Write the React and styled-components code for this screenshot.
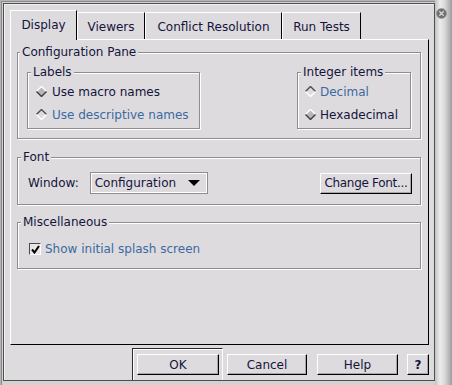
import React from 'react';
import styled, { createGlobalStyle } from 'styled-components';

const GlobalStyle = createGlobalStyle`
  html, body {
    margin: 0;
    padding: 0;
    background: #dedbde;
  }
  body {
    font-family: "DejaVu Sans", "Liberation Sans", sans-serif;
    font-size: 12px;
    color: #14143c;
  }
`;

const BG = '#dedbde';
const INK = '#14143c';
const LINK = '#3a6aa2';

const Screen = styled.div`
  display: flex;
  width: 452px;
  height: 385px;
  overflow: hidden;
`;

const Frame = styled.div`
  width: 435px;
  height: 385px;
  box-sizing: border-box;
  padding: 3px 0 4px 3px;
  background: #d2d2d2;
  box-shadow: inset 1px 1px 0 #b4b4b4, inset 2px 2px 0 #8a8a8a;
`;

const Window = styled.div`
  height: 100%;
  box-sizing: border-box;
  border: 1px solid #4e4e4e;
  background: ${BG};
  box-shadow: inset 1px 1px 0 #f2f2f2;
  display: flex;
  flex-direction: column;
  padding: 6px 5px 0 6px;
`;

const TabStrip = styled.div`
  display: flex;
  align-items: flex-end;
  height: 29px;
`;

const Tab = styled.div`
  box-sizing: border-box;
  width: ${p => p.$w}px;
  height: ${p => (p.$active ? 30 : 27)}px;
  margin-bottom: ${p => (p.$active ? -1 : 0)}px;
  position: relative;
  z-index: ${p => (p.$active ? 1 : 0)};
  background: ${BG};
  border-top: 1px solid #ffffff;
  border-left: 1px solid #ffffff;
  border-right: 1px solid #000000;
  display: flex;
  align-items: center;
  justify-content: center;
  padding-top: ${p => (p.$active ? 0 : 1)}px;
  padding-bottom: ${p => (p.$active ? 1 : 0)}px;
  color: ${INK};
  white-space: nowrap;
`;

const Pane = styled.div`
  box-sizing: border-box;
  height: 306px;
  border-top: 1px solid #ffffff;
  border-left: 1px solid #ffffff;
  border-right: 1px solid #000000;
  border-bottom: 1px solid #000000;
  padding: 12px 7px 0 6px;
  display: flex;
  flex-direction: column;
`;

const Group = styled.div`
  position: relative;
  box-sizing: border-box;
  border: 1px solid #8e8c8e;
  box-shadow: inset 1px 1px 0 #ffffff, 1px 1px 0 #ffffff;
  margin-top: ${p => p.$mt || 0}px;
  width: ${p => (p.$w ? `${p.$w}px` : 'auto')};
  height: ${p => (p.$h ? `${p.$h}px` : 'auto')};
`;

const GroupLabel = styled.span`
  position: absolute;
  top: -8px;
  left: ${p => p.$left ?? 3}px;
  padding: 0 2px;
  line-height: 14px;
  background: ${BG};
  color: ${INK};
  white-space: nowrap;
`;

const ConfigBody = styled.div`
  display: flex;
  justify-content: space-between;
  padding: 19px 9px 9px 9px;
`;

const OptionList = styled.div`
  display: flex;
  flex-direction: column;
  padding: 7px 0 0 ${p => p.$inset}px;
`;

const Option = styled.div`
  display: flex;
  align-items: center;
  height: 23px;
  gap: ${p => p.$gap}px;
  color: ${p => (p.$on ? LINK : INK)};
  white-space: nowrap;
`;

const FontRow = styled.div`
  display: flex;
  align-items: center;
  padding: 14px 8px 10px 10px;
`;

const FieldLabel = styled.span`
  margin-right: 11px;
`;

const Combo = styled.div`
  box-sizing: border-box;
  width: 118px;
  height: 22px;
  border: 1px solid #8e8c8e;
  box-shadow: inset 0 0 0 1px #ffffff;
  display: flex;
  align-items: center;
  justify-content: space-between;
  padding: 0 7px 0 4px;
  color: ${INK};
`;

const Arrow = styled.span`
  width: 0;
  height: 0;
  border-left: 6px solid transparent;
  border-right: 6px solid transparent;
  border-top: 6px solid #000000;
`;

const Button = styled.button`
  box-sizing: border-box;
  width: ${p => p.$w}px;
  height: 21px;
  margin: 0;
  padding: 0;
  background: ${BG};
  border-top: 1px solid #ffffff;
  border-left: 1px solid #ffffff;
  border-right: 1px solid #000000;
  border-bottom: 1px solid #000000;
  box-shadow: inset -1px -1px 0 #a8a6a8;
  font-family: "DejaVu Sans", "Liberation Sans", sans-serif;
  font-size: 12px;
  font-weight: ${p => (p.$bold ? 700 : 400)};
  color: ${INK};
  white-space: nowrap;
  letter-spacing: ${p => p.$tight ? '-0.3px' : 'normal'};
`;

const Spacer = styled.div`
  flex: 1;
`;

const CheckRow = styled.div`
  display: flex;
  align-items: center;
  gap: 4px;
  padding: 19px 0 12px 11px;
  color: ${LINK};
`;

const CheckBox = styled.span`
  box-sizing: border-box;
  width: 12px;
  height: 12px;
  border-top: 1px solid #4a4a4a;
  border-left: 1px solid #4a4a4a;
  border-right: 1px solid #ffffff;
  border-bottom: 1px solid #ffffff;
  background: #e8e6e8;
  display: flex;
  align-items: center;
  justify-content: center;
`;

const ButtonBar = styled.div`
  display: flex;
  justify-content: flex-end;
  align-items: flex-start;
  margin-top: 3px;
  flex: 1;
`;

const DefaultFrame = styled.div`
  box-sizing: border-box;
  width: 91px;
  height: 100%;
  border-top: 1px solid #2a2a2a;
  border-left: 1px solid #2a2a2a;
  border-right: 1px solid #ffffff;
  box-shadow: inset 1px 1px 0 #ffffff;
  padding: 5px 0 0 4px;
  margin-right: 4px;
`;

const BarButton = styled(Button)`
  margin-top: 6px;
  margin-left: ${p => p.$ml || 0}px;
`;

const Strip = styled.div`
  width: 17px;
  height: 385px;
  position: relative;
  background: linear-gradient(to right, #c2c2c2 0%, #ececec 30%, #d6d6d6 60%, #9c9c9c 100%);
`;

const CloseDot = styled.svg`
  position: absolute;
  top: 8px;
  left: 1px;
`;

function Diamond({ sunken }) {
  const hi = sunken ? '#4a4a4a' : '#ffffff';
  const lo = sunken ? '#ffffff' : '#3c3c3c';
  return (
    <svg width="11" height="11" viewBox="0 0 11 11">
      <polygon points="5.5,0.5 10.5,5.5 5.5,10.5 0.5,5.5" fill={sunken ? BG : '#b8b6b8'} />
      <polyline points="0.5,5.5 5.5,0.5 10.5,5.5" fill="none" stroke={hi} strokeWidth="1.4" />
      <polyline points="0.5,5.5 5.5,10.5 10.5,5.5" fill="none" stroke={lo} strokeWidth="1.4" />
    </svg>
  );
}

function Radio({ on, gap, children }) {
  return (
    <Option $on={on} $gap={gap}>
      <Diamond sunken={on} />
      <span>{children}</span>
    </Option>
  );
}

export default function App() {
  return (
    <Screen>
      <GlobalStyle />
      <Frame>
        <Window>
          <TabStrip>
            <Tab $w={67} $active>Display</Tab>
            <Tab $w={68}>Viewers</Tab>
            <Tab $w={137}>Conflict Resolution</Tab>
            <Tab $w={79}>Run Tests</Tab>
          </TabStrip>
          <Pane>
            <Group>
              <GroupLabel $left={2}>Configuration Pane</GroupLabel>
              <ConfigBody>
                <Group $w={173} $h={57}>
                  <GroupLabel>Labels</GroupLabel>
                  <OptionList $inset={8}>
                    <Radio gap={5}>Use macro names</Radio>
                    <Radio gap={5} on>Use descriptive names</Radio>
                  </OptionList>
                </Group>
                <Group $w={114} $h={57}>
                  <GroupLabel>Integer items</GroupLabel>
                  <OptionList $inset={7}>
                    <Radio gap={4} on>Decimal</Radio>
                    <Radio gap={4}>Hexadecimal</Radio>
                  </OptionList>
                </Group>
              </ConfigBody>
            </Group>

            <Group $mt={18}>
              <GroupLabel>Font</GroupLabel>
              <FontRow>
                <FieldLabel>Window:</FieldLabel>
                <Combo>
                  <span>Configuration</span>
                  <Arrow />
                </Combo>
                <Spacer />
                <Button $w={92} $tight>Change Font...</Button>
              </FontRow>
            </Group>

            <Group $mt={17}>
              <GroupLabel>Miscellaneous</GroupLabel>
              <CheckRow>
                <CheckBox>
                  <svg width="9" height="9" viewBox="0 0 9 9">
                    <path d="M1 4.5 L3.5 7.5 L8 1" fill="none" stroke="#000" strokeWidth="2" />
                  </svg>
                </CheckBox>
                <span>Show initial splash screen</span>
              </CheckRow>
            </Group>
          </Pane>
          <ButtonBar>
            <DefaultFrame>
              <Button $w={82}>OK</Button>
            </DefaultFrame>
            <BarButton $w={80}>Cancel</BarButton>
            <BarButton $w={81} $ml={10}>Help</BarButton>
            <BarButton $w={22} $ml={9} $bold>?</BarButton>
          </ButtonBar>
        </Window>
      </Frame>
      <Strip>
        <CloseDot width="11" height="11" viewBox="0 0 11 11">
          <circle cx="5.5" cy="5.5" r="5" fill="#6e6e6e" stroke="#9a9a9a" strokeWidth="0.8" />
          <path d="M3.3 3.3 L7.7 7.7 M7.7 3.3 L3.3 7.7" stroke="#d8d8d8" strokeWidth="1.3" />
        </CloseDot>
      </Strip>
    </Screen>
  );
}
